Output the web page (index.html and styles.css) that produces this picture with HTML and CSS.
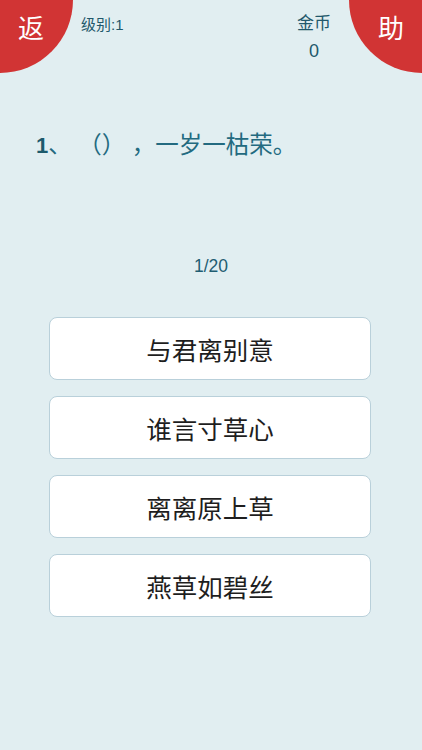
FILE: index.html
```html
<!DOCTYPE html>
<html lang="zh">
<head>
<meta charset="utf-8">
<link rel="stylesheet" href="styles.css">
</head>
<body>
<div class="page">
  <div class="corner left">返</div>
  <div class="corner right">助</div>
  <header class="top">
    <div class="level">级别:1</div>
    <div class="coins"><div>金币</div><div class="num">0</div></div>
  </header>
  <div class="question"><span class="qn">1</span>、 （） ，一岁一枯荣。</div>
  <div class="progress">1/20</div>
  <div class="options">
    <div class="opt">与君离别意</div>
    <div class="opt">谁言寸草心</div>
    <div class="opt">离离原上草</div>
    <div class="opt">燕草如碧丝</div>
  </div>
</div>
</body>
</html>
```
FILE: styles.css
```css
html, body { margin: 0; padding: 0; }
body {
  background: #e1eef1;
  font-family: "Noto Sans CJK SC", "Liberation Sans", sans-serif;
  width: 422px; height: 750px; overflow: hidden;
}
.page { position: relative; width: 422px; height: 750px; overflow: hidden; }
.corner {
  position: absolute; top: -73px; width: 146px; height: 146px;
  border-radius: 50%; background: #d13434; color: #fff;
  font-size: 26px; line-height: 1; box-sizing: border-box;
}
.corner.left { left: -73px; padding: 87px 0 0 91px; }
.corner.right { right: -73px; padding: 87px 0 0 29px; }
.top {
  display: flex; justify-content: space-between;
  padding: 14px 86px 0 81px; color: #21586b;
}
.level { font-size: 15px; line-height: 22px; font-family: "Liberation Sans", "Noto Sans CJK SC", sans-serif; }
.coins { text-align: center; font-size: 17px; line-height: 26px; width: 44px; margin-top: -5px; }
.coins .num { font-family: "Liberation Sans", sans-serif; font-size: 18px; line-height: 26px; margin-top: 3px; }
.question {
  margin: 65px 0 0 36px; font-size: 23.5px; line-height: 32px; color: #236a80;
  font-family: "Liberation Sans", "Noto Sans CJK SC", sans-serif;
}
.qn { font-weight: bold; color: #1d5a6c; font-size: 22px; }
.progress {
  margin-top: 92px; text-align: center; font-size: 17.5px; line-height: 24px;
  color: #1f5d72; font-family: "Liberation Sans", sans-serif;
}
.options {
  display: flex; flex-direction: column; gap: 16px;
  margin: 39px 0 0 49px; width: 322px;
}
.opt {
  height: 63px; box-sizing: border-box; background: #fff;
  border: 1px solid #b9d0da; border-radius: 8px;
  display: flex; align-items: center; justify-content: center;
  font-size: 25.5px; color: #1e1e1e;
}
```
